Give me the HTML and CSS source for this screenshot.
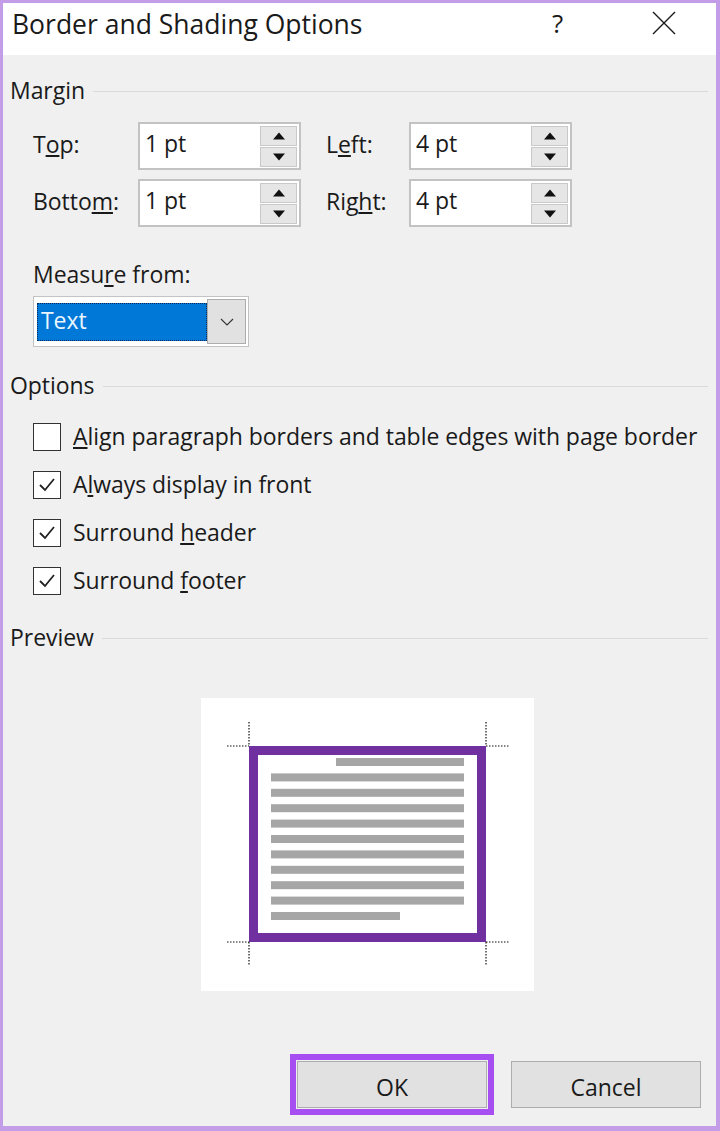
FILE: index.html
```html
<!DOCTYPE html>
<html lang="en">
<head>
<meta charset="utf-8">
<title>Border and Shading Options</title>
<link rel="stylesheet" href="styles.css">
</head>
<body>
<div class="window">
  <div class="titlebar">
    <span class="title">Border and Shading Options</span>
    <span class="help">?</span>
    <svg class="close" width="24" height="24" viewBox="0 0 24 24"><path d="M1 1 L23 23 M23 1 L1 23" stroke="#1a1a1a" stroke-width="1.4" fill="none"/></svg>
  </div>
  <div class="content">
    <div class="section-head s-margin"><span>Margin</span><i class="rule"></i></div>
    <div class="spin-grid">
      <label class="lbl">T<u>o</u>p:</label>
      <div class="spin"><span class="val">1 pt</span><div class="spin-btns"><button class="sb up"></button><button class="sb down"></button></div></div>
      <label class="lbl lbl2">L<u>e</u>ft:</label>
      <div class="spin"><span class="val">4 pt</span><div class="spin-btns"><button class="sb up"></button><button class="sb down"></button></div></div>
      <label class="lbl">Botto<u>m</u>:</label>
      <div class="spin"><span class="val">1 pt</span><div class="spin-btns"><button class="sb up"></button><button class="sb down"></button></div></div>
      <label class="lbl lbl2">Rig<u>h</u>t:</label>
      <div class="spin"><span class="val">4 pt</span><div class="spin-btns"><button class="sb up"></button><button class="sb down"></button></div></div>
    </div>
    <div class="measure-lbl">Measu<u>r</u>e from:</div>
    <div class="select">
      <span class="sel-val">Text</span>
      <span class="sel-btn"><svg width="14" height="8" viewBox="0 0 14 8"><path d="M1 1 L7 7 L13 1" stroke="#333" stroke-width="1.1" fill="none"/></svg></span>
    </div>
    <div class="section-head s-options"><span>Options</span><i class="rule"></i></div>
    <div class="checks">
      <div class="chk"><span class="box"></span><span class="ctext"><u>A</u>lign paragraph borders and table edges with page border</span></div>
      <div class="chk"><span class="box on"><svg width="20" height="20" viewBox="0 0 20 20"><path d="M3 10 L8 15 L17 4" stroke="#222" stroke-width="1.8" fill="none"/></svg></span><span class="ctext">A<u>l</u>ways display in front</span></div>
      <div class="chk"><span class="box on"><svg width="20" height="20" viewBox="0 0 20 20"><path d="M3 10 L8 15 L17 4" stroke="#222" stroke-width="1.8" fill="none"/></svg></span><span class="ctext">Surround <u>h</u>eader</span></div>
      <div class="chk"><span class="box on"><svg width="20" height="20" viewBox="0 0 20 20"><path d="M3 10 L8 15 L17 4" stroke="#222" stroke-width="1.8" fill="none"/></svg></span><span class="ctext">Surround <u>f</u>ooter</span></div>
    </div>
    <div class="section-head s-preview"><span>Preview</span><i class="rule"></i></div>
    <div class="preview">
      <svg width="333" height="293" viewBox="0 0 333 293">
        <g fill="#a6a6a6">
          <rect x="135" y="60" width="128" height="8"/>
          <rect x="70" y="75.4" width="193" height="8"/>
          <rect x="70" y="90.8" width="193" height="8"/>
          <rect x="70" y="106.2" width="193" height="8"/>
          <rect x="70" y="121.6" width="193" height="8"/>
          <rect x="70" y="137" width="193" height="8"/>
          <rect x="70" y="152.4" width="193" height="8"/>
          <rect x="70" y="167.8" width="193" height="8"/>
          <rect x="70" y="183.2" width="193" height="8"/>
          <rect x="70" y="198.6" width="193" height="8"/>
          <rect x="70" y="214" width="129" height="8"/>
        </g>
        <rect x="52.5" y="52.5" width="228" height="187" fill="none" stroke="#7030a0" stroke-width="9"/>
        <g stroke="#111" stroke-width="1.2" stroke-dasharray="1.5 1.5" fill="none">
          <path d="M48 24 V48 M26 48 H48"/>
          <path d="M285 24 V48 M285 48 H308"/>
          <path d="M48 244 V267 M26 244 H48"/>
          <path d="M285 244 V267 M285 244 H308"/>
        </g>
      </svg>
    </div>
    <div class="buttons">
      <div class="focus-ring"><button class="btn">OK</button></div>
      <button class="btn">Cancel</button>
    </div>
  </div>
</div>
</body>
</html>
```

FILE: styles.css
```css
* { box-sizing: border-box; }
html, body { margin: 0; padding: 0; }
body {
  font-family: "Open Sans", "Noto Sans", "Liberation Sans", sans-serif;
  color: #1a1a1a;
  background: #f0f0f0;
}
.window {
  width: 720px;
  height: 1131px;
  border-style: solid;
  border-color: #c49de9;
  border-width: 3px 4px 5px 3px;
  background: #f0f0f0;
  display: flex;
  flex-direction: column;
}
.titlebar {
  height: 52px;
  background: #fff;
  display: flex;
  align-items: center;
  padding-left: 9px;
}
.title {
  font-size: 26.5px;
  letter-spacing: 0;
  flex: 1;
  padding-bottom: 10px;
}
.help {
  font-size: 26px;
  width: 20px;
  margin-right: 80px;
  padding-bottom: 12px;
}
.close { margin-right: 40px; margin-bottom: 12px; }
.content {
  flex: 1;
  display: flex;
  flex-direction: column;
  padding: 0 8px 0 7px;
  font-size: 23px;
  letter-spacing: -0.05px;
}
.section-head {
  display: flex;
  align-items: center;
  height: 30px;
}
.section-head span { padding-right: 8px; }
.rule { flex: 1; height: 1px; background: #dadada; margin-top: 2px; }
.s-margin { margin-top: 20px; }
.s-options { margin-top: 23px; }
.s-preview { margin-top: 17px; }
.spin-grid {
  margin-top: 17px;
  margin-left: 23px;
  display: grid;
  grid-template-columns: 105px 163px 108px 163px;
  row-gap: 9px;
  align-items: center;
}
.lbl { padding-bottom: 4px; }
.lbl2 { padding-left: 25px; }
.spin {
  height: 48px;
  background: #fff;
  border: 2px solid #c3c3c3;
  display: flex;
  align-items: center;
  padding: 2px 2px 1px 5px;
}
.val { flex: 1; padding-bottom: 7px; }
.spin-btns {
  width: 37px;
  height: 100%;
  display: flex;
  flex-direction: column;
  gap: 1px;
}
.sb {
  flex: 1;
  border: 1px solid #c9c9c9;
  background: #e6e6e6;
  padding: 0;
  position: relative;
}
.sb::after {
  content: "";
  position: absolute;
  left: 50%;
  top: 50%;
  width: 0;
  height: 0;
  border-left: 6px solid transparent;
  border-right: 6px solid transparent;
  transform: translate(-50%, -50%);
}
.up::after { border-bottom: 7px solid #111; }
.down::after { border-top: 7px solid #111; }
.measure-lbl { margin-top: 32px; margin-left: 23px; height: 30px; line-height: 30px; }
.select {
  margin-top: 7px;
  margin-left: 23px;
  width: 216px;
  height: 51px;
  background: #fff;
  border: 1px solid #c3c3c3;
  display: flex;
  align-items: center;
  padding: 2px;
}
.sel-val {
  width: 172px;
  height: 38px;
  background: #0078d7;
  color: #eaf6ff;
  outline: 1px dotted #0a2a5a;
  outline-offset: -1px;
  display: flex;
  align-items: center;
  padding: 0 0 4px 4px;
  margin-left: 1px;
}
.sel-btn {
  width: 39px;
  height: 45px;
  background: #e1e1e1;
  border: 1px solid #adadad;
  display: flex;
  align-items: center;
  justify-content: center;
}
.checks { margin-top: 13px; margin-left: 23px; display: flex; flex-direction: column; }
.chk { height: 48px; display: flex; align-items: center; }
.box {
  width: 28px;
  height: 28px;
  border: 1.5px solid #333;
  background: #fff;
  display: flex;
  align-items: center;
  justify-content: center;
  margin-right: 12px;
}
.ctext { padding-bottom: 3px; }
.preview {
  margin-top: 46px;
  margin-left: 191px;
  width: 333px;
  height: 293px;
  background: #fff;
}
.preview svg { display: block; }
.buttons {
  margin-top: 63px;
  display: flex;
  justify-content: flex-end;
  align-items: center;
  gap: 17px;
  padding-right: 7px;
}
.focus-ring {
  border: 6px solid #a64ef2;
  padding: 1px;
}
.btn {
  width: 190px;
  height: 47px;
  background: #e1e1e1;
  border: 1px solid #adadad;
  font-family: inherit;
  font-size: 23px;
  color: #1a1a1a;
  padding: 4px 0 0;
}
```
